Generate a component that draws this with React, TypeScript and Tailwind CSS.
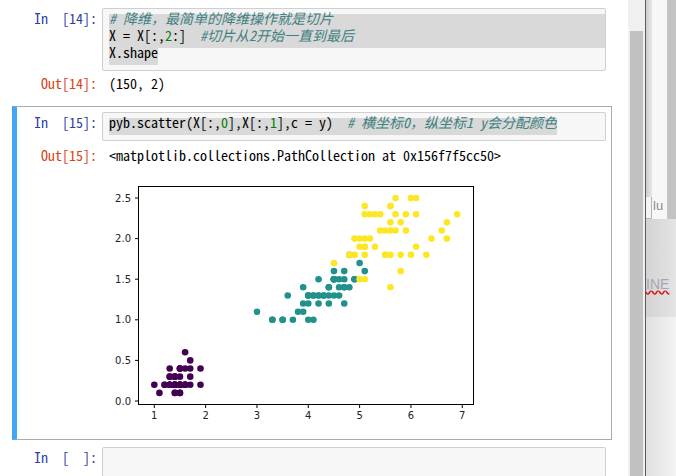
import React from "react";

const MONO =
  "font-['Noto_Sans_Mono_CJK_SC','Liberation_Mono',monospace] text-[14px] leading-[9.5px]";

function parse(s: string): [number, number][] {
  return s.split(" ").map((p) => {
    const [a, b] = p.split(",").map(Number);
    return [a, b];
  });
}

const SETOSA = parse(
  "1.4,.2 1.4,.2 1.3,.2 1.5,.2 1.4,.2 1.7,.4 1.4,.3 1.5,.2 1.4,.2 1.5,.1 1.5,.2 1.6,.2 1.4,.1 1.1,.1 1.2,.2 1.5,.4 1.3,.4 1.4,.3 1.7,.3 1.5,.3 1.7,.2 1.5,.4 1,.2 1.7,.5 1.9,.2 1.6,.2 1.6,.4 1.5,.2 1.4,.2 1.6,.2 1.6,.2 1.5,.4 1.5,.1 1.4,.2 1.5,.2 1.2,.2 1.3,.2 1.4,.1 1.3,.2 1.5,.2 1.3,.3 1.3,.3 1.3,.2 1.6,.6 1.9,.4 1.4,.3 1.6,.2 1.4,.2 1.5,.2 1.4,.2"
);
const VERS = parse(
  "4.7,1.4 4.5,1.5 4.9,1.5 4,1.3 4.6,1.5 4.5,1.3 4.7,1.6 3.3,1 4.6,1.3 3.9,1.4 3.5,1 4.2,1.5 4,1 4.7,1.4 3.6,1.3 4.4,1.4 4.5,1.5 4.1,1 4.5,1.5 3.9,1.1 4.8,1.8 4,1.3 4.9,1.5 4.7,1.2 4.3,1.3 4.4,1.4 4.8,1.4 5,1.7 4.5,1.5 3.5,1 3.8,1.1 3.7,1 3.9,1.2 5.1,1.6 4.5,1.5 4.5,1.6 4.7,1.5 4.4,1.3 4.1,1.3 4,1.3 4.4,1.2 4.6,1.4 4,1.2 3.3,1 4.2,1.3 4.2,1.2 4.2,1.3 4.3,1.3 3,1.1 4.1,1.3"
);
const VIRG = parse(
  "6,2.5 5.1,1.9 5.9,2.1 5.6,1.8 5.8,2.2 6.6,2.1 4.5,1.7 6.3,1.8 5.8,1.8 6.1,2.5 5.1,2 5.3,1.9 5.5,2.1 5,2 5.1,2.4 5.3,2.3 5.5,1.8 6.7,2.2 6.9,2.3 5,1.5 5.7,2.3 4.9,2 6.7,2 4.9,1.8 5.7,2.1 6,1.8 4.8,1.8 4.9,1.8 5.6,2.1 5.8,1.6 6.1,1.9 6.4,2 5.6,2.2 5.1,1.5 5.6,1.4 6.1,2.3 5.6,2.4 5.5,1.8 4.8,1.8 5.4,2.1 5.6,2.4 5.1,2.3 5.1,1.9 5.9,2.3 5.7,2.5 5.2,2.3 5,1.9 5.2,2 5.4,2.3 5.1,1.8"
);

const px = (v: number) => 154.3 + (v - 1) * 51.33;
const py = (v: number) => 401 - v * 81.2;

function Plot() {
  const groups: [[number, number][], string][] = [
    [SETOSA, "#440154"],
    [VERS, "#21918c"],
    [VIRG, "#fde725"],
  ];
  const yt = [0, 0.5, 1, 1.5, 2, 2.5];
  const xt = [1, 2, 3, 4, 5, 6, 7];
  return (
    <svg width={380} height={262} viewBox="102 170 380 262" className="block">
      {groups.map(([pts, c], g) =>
        pts.map(([a, b], i) => (
          <circle key={`${g}-${i}`} cx={px(a)} cy={py(b)} r={3.3} fill={c} />
        ))
      )}
      <rect x={138.5} y={186.5} width={335} height={218} fill="none" stroke="#000" strokeWidth={1} />
      {yt.map((v) => (
        <g key={`y${v}`}>
          <line x1={135} x2={138.5} y1={py(v)} y2={py(v)} stroke="#000" strokeWidth={1} />
          <text
            x={131}
            y={py(v) + 3.6}
            textAnchor="end"
            fontSize={10}
            fontFamily="'DejaVu Sans', sans-serif"
            fill="#222"
          >
            {v.toFixed(1)}
          </text>
        </g>
      ))}
      {xt.map((v) => (
        <g key={`x${v}`}>
          <line x1={px(v)} x2={px(v)} y1={404.5} y2={408} stroke="#000" strokeWidth={1} />
          <text
            x={px(v)}
            y={419}
            textAnchor="middle"
            fontSize={10}
            fontFamily="'DejaVu Sans', sans-serif"
            fill="#222"
          >
            {v}
          </text>
        </g>
      ))}
    </svg>
  );
}

function Line({ children, hl }: { children?: React.ReactNode; hl?: boolean }) {
  return (
    <div className={hl ? "h-[17px] whitespace-pre bg-[#d9d9d9]" : "h-[17px] whitespace-pre"}>
      {children}
    </div>
  );
}

const Cm = ({ children }: { children: React.ReactNode }) => (
  <span className="italic text-[#408080]">{children}</span>
);
const Num = ({ children }: { children: React.ReactNode }) => (
  <span className="text-[#008000]">{children}</span>
);

function InPrompt({ label }: { label: string }) {
  return (
    <div className="w-[84px] shrink-0 pr-[5px] pt-[6px] text-right text-[#303f9f]">
      <div className="h-[17px] whitespace-pre">{label}</div>
    </div>
  );
}

function OutPrompt({ label }: { label: string }) {
  return (
    <div className="w-[84px] shrink-0 pr-[5px] text-right text-[#d84315]">
      <div className="h-[17px] whitespace-pre">{label}</div>
    </div>
  );
}

export default function App() {
  return (
    <div className={`w-[676px] h-[476px] overflow-hidden flex bg-white text-black ${MONO}`}>
      <div className="w-[628px] shrink-0 pt-[2px]">
        {/* Cell 14 */}
        <div className="ml-[12px] w-[600px] border border-transparent p-[5px]">
          <div className="flex">
            <InPrompt label={"In\u00a0\u00a0[14]:"} />
            <div className="flex-1 border border-[#cfcfcf] bg-[#f7f7f7] rounded-[2px] py-[5px] pl-[6px]">
              <Line hl>
                <Cm>{"# 降维，最简单的降维操作就是切片"}</Cm>
              </Line>
              <Line hl>
                {"X = X[:,"}
                <Num>2</Num>
                {":]  "}
                <Cm>{"#切片从2开始一直到最后"}</Cm>
              </Line>
              <Line>
                <span className="inline-block h-[17px] align-top bg-[#d9d9d9]">X.shape</span>
              </Line>
            </div>
          </div>
          <div className="flex mt-[8px]">
            <OutPrompt label="Out[14]:" />
            <div className="pl-[7px] h-[17px] whitespace-pre">(150, 2)</div>
          </div>
        </div>

        {/* Cell 15 (selected) */}
        <div className="ml-[12px] mt-[4px] w-[600px] border border-[#ababab] border-l-[5px] border-l-[#42a5f5] pt-[5px] pr-[5px] pb-[7px] pl-[1px]">
          <div className="flex">
            <InPrompt label={"In\u00a0\u00a0[15]:"} />
            <div className="flex-1 border border-[#cfcfcf] bg-[#f7f7f7] rounded-[2px] py-[5px] pl-[6px]">
              <Line>
                <span className="inline-block h-[17px] align-top bg-[#d9d9d9]">
                  {"pyb.scatter(X[:,"}
                  <Num>0</Num>
                  {"],X[:,"}
                  <Num>1</Num>
                  {"],c = y)  "}
                  <Cm>{"# 横坐标0，纵坐标1 y会分配颜色"}</Cm>
                </span>
              </Line>
            </div>
          </div>
          <div className="flex mt-[10px]">
            <OutPrompt label="Out[15]:" />
            <div className="pl-[7px] h-[17px] whitespace-pre">
              {"<matplotlib.collections.PathCollection at 0x156f7f5cc50>"}
            </div>
          </div>
          <div className="flex mt-[2px]">
            <div className="w-[84px] shrink-0" />
            <Plot />
          </div>
        </div>

        {/* Empty cell */}
        <div className="ml-[12px] mt-[1px] w-[600px] border border-transparent p-[5px]">
          <div className="flex">
            <InPrompt label={"In\u00a0\u00a0[\u00a0\u00a0]:"} />
            <div className="flex-1 h-[30px] border border-[#cfcfcf] bg-[#f7f7f7] rounded-[2px]" />
          </div>
        </div>
      </div>

      {/* scrollbar */}
      <div className="w-[17px] shrink-0 bg-[#f0f0f0] flex flex-col">
        <div className="h-[31px]" />
        <div className="flex-1 mx-[2px] bg-[#c1c1c1]" />
      </div>
      <div className="w-[1px] shrink-0 bg-[#5a5a5a]" />

      {/* background window strip */}
      <div className="w-[30px] shrink-0 flex flex-col font-['Liberation_Sans',sans-serif]">
        <div className="h-[219px] flex">
          <div className="w-[6px] flex flex-col bg-linear-to-r from-[#cdcdcd] to-[#e8e8e8]">
            <div className="flex-1" />
            <div className="h-[22px] border-r border-b border-[#b5b5b5] bg-[#f3f3f3]" />
          </div>
          <div className="w-[15px] bg-[#f7f7f7] flex flex-col justify-end">
            <div className="h-[22px] pl-[1px] text-[13px] leading-[18px] text-[#8a8a8a]">lu</div>
          </div>
          <div className="flex-1 bg-[#c3c3c3]" />
        </div>
        <div className="h-[98px] bg-linear-to-r from-[#d3d3d3] to-[#e4e4e4] pt-[58px]">
          <span className="text-[14px] leading-[14px] text-[#a9a6b3] underline decoration-wavy decoration-[#e01010] whitespace-nowrap">
            INE
          </span>
        </div>
        <div className="flex-1 bg-linear-to-r from-[#e0e0e0] to-[#f3f3f3]" />
      </div>
    </div>
  );
}
